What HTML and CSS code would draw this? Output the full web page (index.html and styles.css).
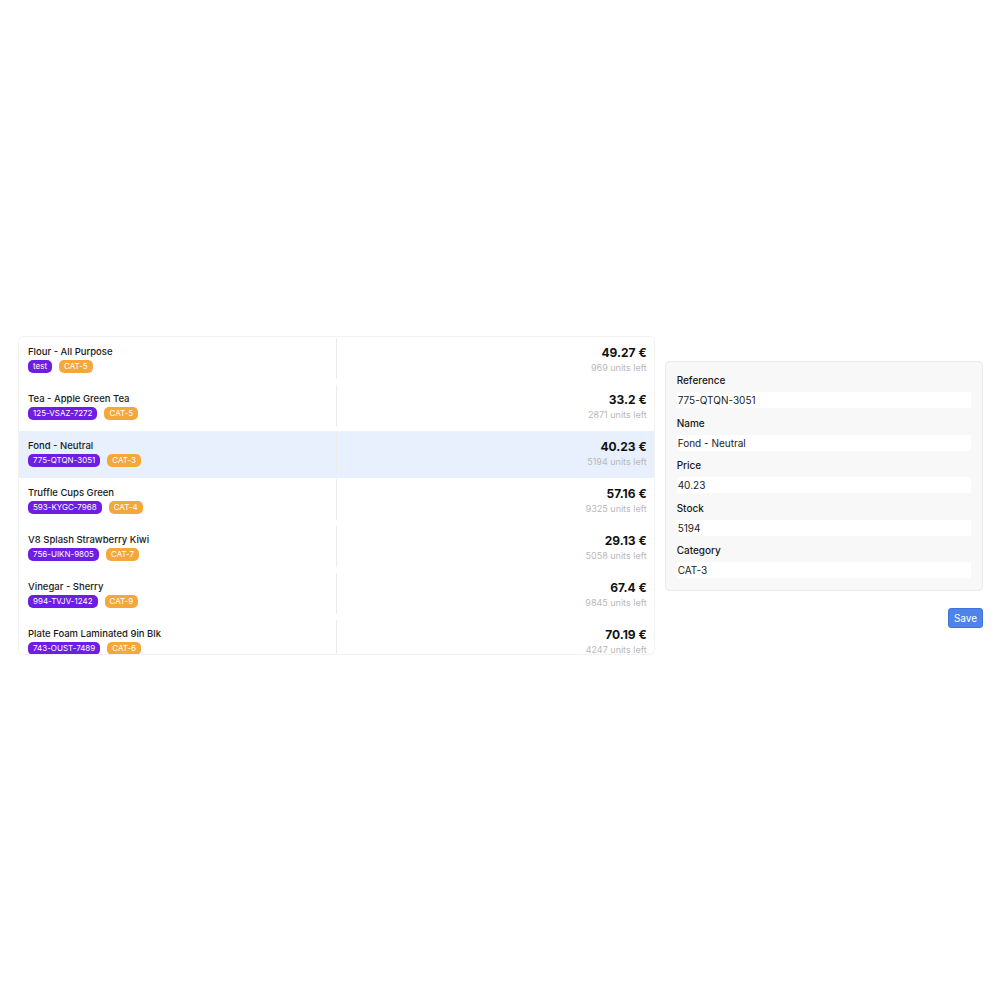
FILE: index.html
```html
<!DOCTYPE html>
<html>
<head>
<meta charset="utf-8">
<link rel="stylesheet" href="styles.css">
</head>
<body>
<div class="page">
  <div class="list">
    <div class="row">
      <div class="cell left">
        <div class="name">Flour - All Purpose</div>
        <div class="tags"><span class="tag ref">test</span><span class="tag cat">CAT-5</span></div>
      </div>
      <div class="cell right">
        <div class="price">49.27 €</div>
        <div class="units">969 units left</div>
      </div>
    </div>
    <div class="row">
      <div class="cell left">
        <div class="name">Tea - Apple Green Tea</div>
        <div class="tags"><span class="tag ref">125-VSAZ-7272</span><span class="tag cat">CAT-5</span></div>
      </div>
      <div class="cell right">
        <div class="price">33.2 €</div>
        <div class="units">2871 units left</div>
      </div>
    </div>
    <div class="row selected">
      <div class="cell left">
        <div class="name">Fond - Neutral</div>
        <div class="tags"><span class="tag ref">775-QTQN-3051</span><span class="tag cat">CAT-3</span></div>
      </div>
      <div class="cell right">
        <div class="price">40.23 €</div>
        <div class="units">5194 units left</div>
      </div>
    </div>
    <div class="row">
      <div class="cell left">
        <div class="name">Truffle Cups Green</div>
        <div class="tags"><span class="tag ref">593-KYGC-7968</span><span class="tag cat">CAT-4</span></div>
      </div>
      <div class="cell right">
        <div class="price">57.16 €</div>
        <div class="units">9325 units left</div>
      </div>
    </div>
    <div class="row">
      <div class="cell left">
        <div class="name">V8 Splash Strawberry Kiwi</div>
        <div class="tags"><span class="tag ref">756-UIKN-9805</span><span class="tag cat">CAT-7</span></div>
      </div>
      <div class="cell right">
        <div class="price">29.13 €</div>
        <div class="units">5058 units left</div>
      </div>
    </div>
    <div class="row">
      <div class="cell left">
        <div class="name">Vinegar - Sherry</div>
        <div class="tags"><span class="tag ref">994-TVJV-1242</span><span class="tag cat">CAT-9</span></div>
      </div>
      <div class="cell right">
        <div class="price">67.4 €</div>
        <div class="units">9845 units left</div>
      </div>
    </div>
    <div class="row">
      <div class="cell left">
        <div class="name">Plate Foam Laminated 9in Blk</div>
        <div class="tags"><span class="tag ref">743-OUST-7489</span><span class="tag cat">CAT-6</span></div>
      </div>
      <div class="cell right">
        <div class="price">70.19 €</div>
        <div class="units">4247 units left</div>
      </div>
    </div>
  </div>
  <div class="side">
    <div class="card">
      <div class="field"><div class="label">Reference</div><div class="input">775-QTQN-3051</div></div>
      <div class="field"><div class="label">Name</div><div class="input">Fond - Neutral</div></div>
      <div class="field"><div class="label">Price</div><div class="input">40.23</div></div>
      <div class="field"><div class="label">Stock</div><div class="input">5194</div></div>
      <div class="field"><div class="label">Category</div><div class="input">CAT-3</div></div>
    </div>
    <div class="actions"><button class="save">Save</button></div>
  </div>
</div>
</body>
</html>
```
FILE: styles.css
```css
* { box-sizing: border-box; }
body {
  margin: 0;
  background: #fff;
  font-family: "Inter", "Noto Sans", sans-serif;
  color: #111;
}
.page {
  display: grid;
  grid-template-columns: 2fr 1fr;
  column-gap: 10px;
  padding: 336px 17px 0 18px;
  align-items: start;
}
.list {
  height: 319px;
  overflow: hidden;
  border: 1px solid #f2f2f2;
  border-radius: 5px;
}
.row {
  display: grid;
  grid-template-columns: 1fr 1fr;
  padding: 1px 0 5px;
}
.row.selected { background: #e8f0fd; }
.cell { height: 41px; padding-top: 7px; }
.left { padding-left: 9px; }
.right {
  border-left: 1px solid #ececec;
  text-align: right;
  padding-right: 7px;
}
.name {
  font-size: 9.5px;
  font-weight: 500;
  line-height: 14px;
  color: #1a1a1a;
}
.tags { display: flex; gap: 7px; margin-top: 1px; }
.tag {
  display: inline-block;
  height: 13px;
  line-height: 13px;
  padding: 0 5px;
  border-radius: 5px;
  font-size: 8px;
  color: #fff;
}
.tag.ref { background: #6e1de2; }
.tag.cat { background: #f4a73b; }
.price {
  font-size: 12px;
  font-weight: 700;
  line-height: 16px;
  color: #111;
}
.units {
  font-size: 9px;
  line-height: 14px;
  color: #b9b9b9;
}
.side { padding-top: 25px; }
.card {
  background: #f8f8f8;
  border: 1px solid #ebebeb;
  border-radius: 4px;
  padding: 10px 11px 12px 11px;
}
.field + .field { margin-top: 6.5px; }
.label {
  font-size: 10px;
  font-weight: 500;
  line-height: 16px;
  margin-bottom: 4px;
  color: #1a1a1a;
}
.input {
  height: 16px;
  line-height: 16px;
  background: #fff;
  font-size: 10px;
  padding-left: 1px;
  color: #222;
}
.actions { display: flex; justify-content: flex-end; margin-top: 17px; }
.save {
  font-family: inherit;
  font-size: 10px;
  width: 35px;
  height: 20px;
  padding: 0;
  color: #fff;
  background: #4d83eb;
  border: 1px solid #3f74dd;
  border-radius: 3px;
}
```
